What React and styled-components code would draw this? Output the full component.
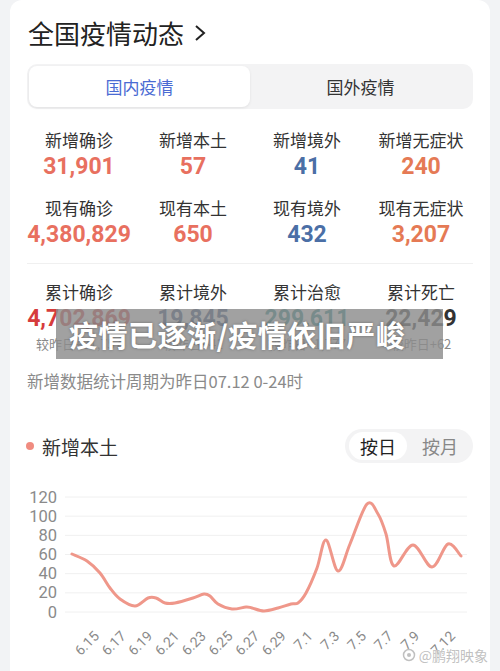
import React from "react";
import styled, { createGlobalStyle } from "styled-components";

const GlobalStyle = createGlobalStyle`
  html, body {
    margin: 0;
    padding: 0;
    background: #f2f3f5;
  }
  body {
    font-family: "Noto Sans CJK SC", "Noto Sans", sans-serif;
    color: #222;
  }
`;

const Page = styled.div`
  padding: 0 10px;
  height: 671px;
  overflow: hidden;
`;

const Card = styled.div`
  position: relative;
  background: #fff;
  border-radius: 12px;
  padding-top: 16px;
  min-height: 700px;
`;

const Title = styled.h1`
  display: flex;
  align-items: center;
  gap: 10px;
  margin: 0 0 0 18px;
  height: 34px;
  font-size: 26px;
  font-weight: 400;
  color: #222;
  line-height: 34px;
`;

const Tabs = styled.div`
  display: grid;
  grid-template-columns: 1fr 1fr;
  margin: 14px 17px 0;
  height: 45px;
  padding: 2px;
  box-sizing: border-box;
  background: #f3f3f4;
  border-radius: 10px;
`;

const Tab = styled.div`
  display: flex;
  align-items: center;
  justify-content: center;
  font-size: 17px;
  border-radius: 8px;
  background: ${(p) => (p.$active ? "#fff" : "transparent")};
  color: ${(p) => (p.$active ? "#4a6bd3" : "#333")};
  box-shadow: ${(p) => (p.$active ? "0 1px 3px rgba(0,0,0,0.08)" : "none")};
`;

const StatsGrid = styled.div`
  display: grid;
  grid-template-columns: repeat(4, 1fr);
  row-gap: 14px;
  margin: ${(p) => (p.$first ? "20px" : "0")} 12px 0;
`;

const Stat = styled.div`
  display: flex;
  flex-direction: column;
  align-items: center;
`;

const StatLabel = styled.div`
  font-size: 17px;
  line-height: 22px;
  color: #333;
  white-space: nowrap;
`;

const StatValue = styled.div`
  font-family: Roboto, "Noto Sans", sans-serif;
  font-weight: 700;
  font-size: 23px;
  line-height: 32px;
  color: ${(p) => p.$color};
  white-space: nowrap;
`;

const StatSub = styled.div`
  font-size: 13px;
  line-height: 18px;
  color: #888;
  white-space: nowrap;
`;

const Divider = styled.div`
  height: 1px;
  background: #f0f0f0;
  margin: 12px 17px 17px;
`;

const Note = styled.div`
  margin: 16px 0 0 17px;
  font-size: 16.5px;
  line-height: 24px;
  color: #8a8a8a;
`;

const ChartHeader = styled.div`
  display: flex;
  align-items: center;
  justify-content: space-between;
  margin: 36px 17px 0 16px;
  height: 34px;
`;

const Legend = styled.div`
  display: flex;
  align-items: center;
  gap: 8px;
  font-size: 19px;
  color: #333;
`;

const Dot = styled.span`
  width: 8px;
  height: 8px;
  border-radius: 50%;
  background: #f08c80;
`;

const Toggle = styled.div`
  display: flex;
  align-items: center;
  gap: 4px;
  height: 34px;
  padding: 0 4px;
  box-sizing: border-box;
  background: #f3f3f4;
  border-radius: 17px;
`;

const ToggleItem = styled.div`
  display: flex;
  align-items: center;
  justify-content: center;
  width: 58px;
  height: 28px;
  border-radius: 14px;
  font-size: 18px;
  background: ${(p) => (p.$active ? "#fff" : "transparent")};
  color: ${(p) => (p.$active ? "#222" : "#888")};
`;

const ChartSvg = styled.svg`
  display: block;
  margin-top: 8px;
`;

const Banner = styled.div`
  position: absolute;
  left: 46px;
  top: 309px;
  width: 387px;
  height: 50px;
  display: flex;
  align-items: center;
  padding-left: 13px;
  box-sizing: border-box;
  background: rgba(140, 140, 140, 0.82);
  color: #fff;
  font-size: 29px;
  font-weight: 700;
  letter-spacing: 0.5px;
  text-shadow: 0 0 3px rgba(0, 0, 0, 0.35);
`;

const Watermark = styled.div`
  position: absolute;
  right: 2px;
  top: 645px;
  display: flex;
  align-items: center;
  gap: 3px;
  font-size: 14px;
  color: rgba(185, 185, 185, 0.9);
  text-shadow: 0 0 1px #fff;
`;

const stats = [
  { label: "新增确诊", value: "31,901", color: "#e8705f" },
  { label: "新增本土", value: "57", color: "#e8705f" },
  { label: "新增境外", value: "41", color: "#4b6fa6" },
  { label: "新增无症状", value: "240", color: "#e57a55" },
  { label: "现有确诊", value: "4,380,829", color: "#e8705f" },
  { label: "现有本土", value: "650", color: "#e8705f" },
  { label: "现有境外", value: "432", color: "#4b6fa6" },
  { label: "现有无症状", value: "3,207", color: "#e57a55" },
];

const totals = [
  { label: "累计确诊", value: "4,702,869", color: "#d63c3c", sub: "较昨日+31,757" },
  { label: "累计境外", value: "19,845", color: "#2d4a78", sub: "较昨日+41" },
  { label: "累计治愈", value: "299,611", color: "#1e8784", sub: "较昨日+1,777" },
  { label: "累计死亡", value: "22,429", color: "#333", sub: "较昨日+62" },
];

// curve traced in page pixels
const pts = [
  [72, 553], [87, 560], [100, 572], [110, 587], [120, 598], [135, 605],
  [148, 597], [156, 597], [165, 602], [175, 602], [193, 597], [204, 593],
  [210, 595], [218, 603], [232, 608], [246, 606], [252, 607], [264, 610],
  [278, 607], [291, 603], [298, 602], [306, 592], [317, 567], [326, 539],
  [338, 570], [350, 543], [367, 503], [378, 513], [386, 533], [394, 565],
  [413, 544], [432, 566], [448, 543], [461, 555],
];

function smoothPath(p) {
  let d = `M${p[0][0]} ${p[0][1]}`;
  for (let i = 0; i < p.length - 1; i++) {
    const p0 = p[i - 1] || p[i];
    const p1 = p[i];
    const p2 = p[i + 1];
    const p3 = p[i + 2] || p2;
    const c1x = p1[0] + (p2[0] - p0[0]) / 6;
    const c1y = p1[1] + (p2[1] - p0[1]) / 6;
    const c2x = p2[0] - (p3[0] - p1[0]) / 6;
    const c2y = p2[1] - (p3[1] - p1[1]) / 6;
    d += ` C${c1x.toFixed(1)} ${c1y.toFixed(1)} ${c2x.toFixed(1)} ${c2y.toFixed(1)} ${p2[0]} ${p2[1]}`;
  }
  return d;
}

const yTicks = [120, 100, 80, 60, 40, 20, 0];
const xLabels = ["6.15", "6.17", "6.19", "6.21", "6.23", "6.25", "6.27", "6.29", "7.1", "7.3", "7.5", "7.7", "7.9"];

function AxisLabel({ x, children }) {
  return (
    <text x={x} y="636" textAnchor="end" fontSize="14" fill="#8a8a8a"
      fontFamily="Roboto, sans-serif" transform={`rotate(-45 ${x} 636)`}>{children}</text>
  );
}

function Chart() {
  return (
    <ChartSvg width="480" height="201" viewBox="10 470 480 201">
      {yTicks.map((v, i) => {
        const y = 496 + i * 19.17;
        return (
          <g key={v}>
            <line x1="65" x2="467" y1={y} y2={y} stroke="#f0f0f0" strokeWidth="1" />
            <text x="57" y={y} textAnchor="end" dominantBaseline="central"
              fontSize="16.5" fill="#8a8a8a" fontFamily="Roboto, sans-serif">{v}</text>
          </g>
        );
      })}
      <path d={smoothPath(pts)} fill="none" stroke="#ef978a" strokeWidth="3"
        strokeLinecap="round" strokeLinejoin="round" />
      {xLabels.map((l, i) => (
        <AxisLabel key={l} x={100 + i * 26.7}>{l}</AxisLabel>
      ))}
      <AxisLabel x={456}>7.12</AxisLabel>
    </ChartSvg>
  );
}

export default function App() {
  return (
    <Page>
      <GlobalStyle />
      <Card>
        <Title>
          全国疫情动态
          <svg width="12" height="20" viewBox="0 0 12 20">
            <path d="M2 3 L10 10 L2 17" fill="none" stroke="#222" strokeWidth="2" />
          </svg>
        </Title>
        <Tabs>
          <Tab $active>国内疫情</Tab>
          <Tab>国外疫情</Tab>
        </Tabs>
        <StatsGrid $first>
          {stats.map((s) => (
            <Stat key={s.label}>
              <StatLabel>{s.label}</StatLabel>
              <StatValue $color={s.color}>{s.value}</StatValue>
            </Stat>
          ))}
        </StatsGrid>
        <Divider />
        <StatsGrid>
          {totals.map((s) => (
            <Stat key={s.label}>
              <StatLabel>{s.label}</StatLabel>
              <StatValue $color={s.color}>{s.value}</StatValue>
              <StatSub>{s.sub}</StatSub>
            </Stat>
          ))}
        </StatsGrid>
        <Note>新增数据统计周期为昨日07.12 0-24时</Note>
        <ChartHeader>
          <Legend>
            <Dot />
            新增本土
          </Legend>
          <Toggle>
            <ToggleItem $active>按日</ToggleItem>
            <ToggleItem>按月</ToggleItem>
          </Toggle>
        </ChartHeader>
        <Chart />
        <Banner>疫情已逐渐/疫情依旧严峻</Banner>
        <Watermark>
          <svg width="14" height="14" viewBox="0 0 14 14">
            <circle cx="7" cy="7" r="5.5" fill="none" stroke="rgba(185,185,185,0.9)" strokeWidth="1.5" />
            <circle cx="7" cy="7" r="2" fill="rgba(185,185,185,0.9)" />
          </svg>
          @鹏翔映象
        </Watermark>
      </Card>
    </Page>
  );
}
